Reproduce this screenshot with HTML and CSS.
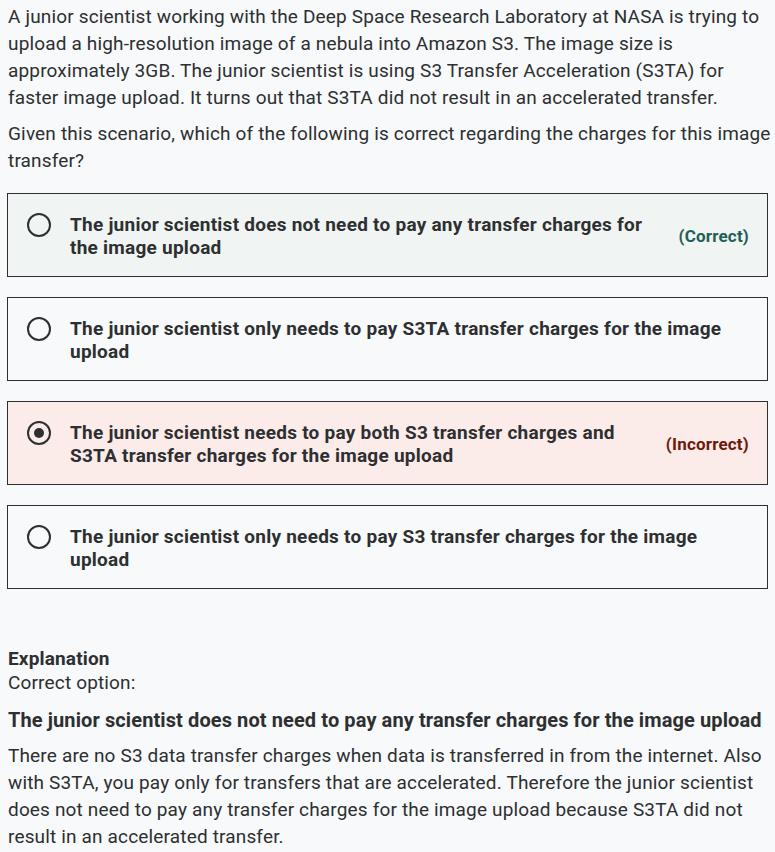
FILE: index.html
```html
<!DOCTYPE html>
<html lang="en">
<head>
<meta charset="utf-8">
<title>Question</title>
<link rel="stylesheet" href="styles.css">
</head>
<body>
<div class="page">
  <div class="question">
    <p>A junior scientist working with the Deep Space Research Laboratory at NASA is trying to upload a high-resolution image of a nebula into Amazon S3. The image size is approximately 3GB. The junior scientist is using S3 Transfer Acceleration (S3TA) for faster image upload. It turns out that S3TA did not result in an accelerated transfer.</p>
    <p>Given this scenario, which of the following is correct regarding the charges for this image transfer?</p>
  </div>
  <ul class="options">
    <li class="option option-correct">
      <span class="radio"></span>
      <span class="option-text">The junior scientist does not need to pay any transfer charges for the image upload</span>
      <span class="status status-correct">(Correct)</span>
    </li>
    <li class="option">
      <span class="radio"></span>
      <span class="option-text">The junior scientist only needs to pay S3TA transfer charges for the image upload</span>
    </li>
    <li class="option option-incorrect">
      <span class="radio radio-checked"></span>
      <span class="option-text">The junior scientist needs to pay both S3 transfer charges and S3TA transfer charges for the image upload</span>
      <span class="status status-incorrect">(Incorrect)</span>
    </li>
    <li class="option">
      <span class="radio"></span>
      <span class="option-text">The junior scientist only needs to pay S3 transfer charges for the image upload</span>
    </li>
  </ul>
  <div class="explanation">
    <div class="exp-title">Explanation</div>
    <div class="exp-sub">Correct option:</div>
    <p class="exp-answer">The junior scientist does not need to pay any transfer charges for the image upload</p>
    <p>There are no S3 data transfer charges when data is transferred in from the internet. Also with S3TA, you pay only for transfers that are accelerated. Therefore the junior scientist does not need to pay any transfer charges for the image upload because S3TA did not result in an accelerated transfer.</p>
  </div>
</div>
</body>
</html>
```

FILE: styles.css
```css
html, body {
  margin: 0;
  padding: 0;
  background: #f7f9fa;
}
body {
  font-family: "Roboto", "Liberation Sans", sans-serif;
  color: #2d2f31;
  font-size: 19px;
  line-height: 27px;
  letter-spacing: 0.16px;
}
.page {
  padding: 3px 0 0 8px;
}
p {
  margin: 0 0 8px 0;
}
.question p {
  margin-bottom: 9px;
}
.options {
  list-style: none;
  margin: 19px 7px 0 -1px;
  padding: 0;
  display: flex;
  flex-direction: column;
  gap: 20px;
}
.option {
  display: flex;
  align-items: flex-start;
  border: 1px solid #2d2f31;
  padding: 19px 18px 17px 19px;
  font-weight: 700;
  font-size: 19px;
  line-height: 23px;
  letter-spacing: 0.25px;
}
.option-correct {
  background: #f0f4f3;
}
.option-incorrect {
  background: #fbebe9;
}
.radio {
  flex: none;
  width: 24px;
  height: 24px;
  box-sizing: border-box;
  border: 2px solid #2d2f31;
  border-radius: 50%;
  margin: 0 19px 0 0;
  display: flex;
  align-items: center;
  justify-content: center;
}
.radio-checked::after {
  content: "";
  width: 10px;
  height: 10px;
  border-radius: 50%;
  background: #2d2f31;
}
.option-text {
  flex: 1;
}
.status {
  flex: none;
  align-self: center;
  margin-left: 30px;
  font-size: 17px;
  letter-spacing: 0.2px;
}
.status-correct {
  color: #1e6055;
}
.status-incorrect {
  color: #6d1a0b;
}
.explanation {
  margin-top: 58px;
}
.exp-title {
  font-weight: 700;
  line-height: 24px;
}
.exp-sub {
  line-height: 24px;
  margin-bottom: 12px;
}
.exp-answer {
  font-weight: 700;
  font-size: 20px;
  letter-spacing: 0.1px;
  margin-bottom: 8px;
}
```
